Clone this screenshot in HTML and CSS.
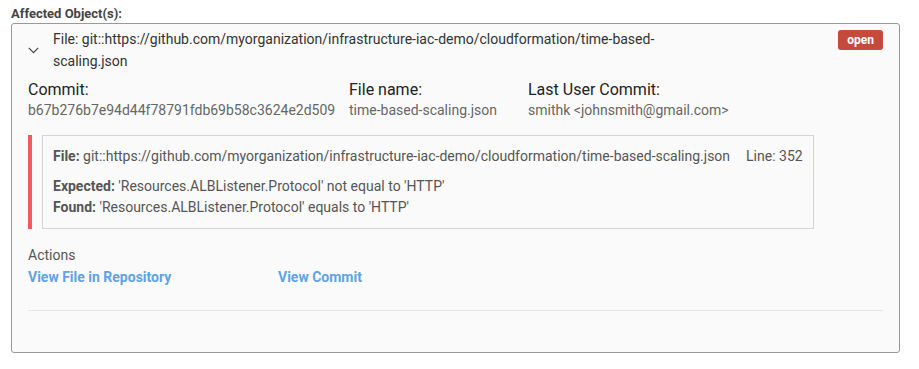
FILE: index.html
```html
<!DOCTYPE html>
<html lang="en">
<head>
    <meta charset="UTF-8">
    <title>Affected Objects</title>
    <link rel="stylesheet" href="styles.css">
</head>
<body>
    <div class="section-title">Affected Object(s):</div>

    <div class="object-card">
        <div class="object-header">
            <span class="chevron">
                <svg width="11" height="7" viewBox="0 0 11 7"><path d="M0.8 0.8 L5.5 5.6 L10.2 0.8" fill="none" stroke="#444" stroke-width="1.2"/></svg>
            </span>
            <div class="object-path">File: git::https://github.com/myorganization/infrastructure-iac-demo/cloudformation/time-based-scaling.json</div>
            <span class="status-badge">open</span>
        </div>

        <div class="commit-info">
            <div class="info-col">
                <div class="info-label">Commit:</div>
                <div class="info-value">b67b276b7e94d44f78791fdb69b58c3624e2d509</div>
            </div>
            <div class="info-col">
                <div class="info-label">File name:</div>
                <div class="info-value">time-based-scaling.json</div>
            </div>
            <div class="info-col">
                <div class="info-label">Last User Commit:</div>
                <div class="info-value">smithk &lt;johnsmith@gmail.com&gt;</div>
            </div>
        </div>

        <div class="finding">
            <div class="finding-box">
                <div class="finding-file">
                    <span><b>File:</b> git::https://github.com/myorganization/infrastructure-iac-demo/cloudformation/time-based-scaling.json</span>
                    <span class="finding-line">Line: 352</span>
                </div>
                <div class="finding-detail"><b>Expected:</b> 'Resources.ALBListener.Protocol' not equal to 'HTTP'</div>
                <div class="finding-detail"><b>Found:</b> 'Resources.ALBListener.Protocol' equals to 'HTTP'</div>
            </div>
        </div>

        <div class="actions">
            <div class="actions-title">Actions</div>
            <div class="actions-links">
                <a href="#" class="action-link">View File in Repository</a>
                <a href="#" class="action-link">View Commit</a>
            </div>
        </div>

        <div class="divider"></div>
    </div>
</body>
</html>
```

FILE: styles.css
```css
body {
    font-family: Roboto, 'Liberation Sans', sans-serif;
    margin: 0;
    padding: 4px 19px 0 11px;
    background: #fff;
}

.section-title {
    font-size: 13px;
    font-weight: 700;
    color: #444;
    line-height: 19px;
}

.object-card {
    background: #fafafa;
    border: 1px solid #999;
    border-radius: 3px;
    padding: 4px 16px 41px 16px;
}

.object-header {
    display: flex;
    align-items: flex-start;
}

.chevron {
    width: 25px;
    padding-top: 19px;
    display: flex;
}

.object-path {
    max-width: 620px;
    font-size: 14px;
    line-height: 22px;
    color: #333;
}

.status-badge {
    margin-left: auto;
    margin-top: 2px;
    background: #c64a3b;
    color: #fff;
    font-size: 12px;
    font-weight: 700;
    line-height: 20px;
    padding: 0 9px;
    border-radius: 3px;
}

.commit-info {
    display: grid;
    grid-template-columns: 321px 179px auto;
    margin-top: 8px;
}

.info-label {
    font-size: 16px;
    line-height: 20px;
    color: #222;
}

.info-value {
    font-size: 14px;
    line-height: 20px;
    color: #666;
}

.finding {
    margin-top: 15px;
    border-left: 4px solid #f25b5b;
    padding-left: 10px;
    width: fit-content;
}

.finding-box {
    border: 1px solid #d4d4d4;
    padding: 10px 10px 10px 10px;
    font-size: 14px;
    color: #555;
}

.finding-file {
    display: flex;
    gap: 16px;
    white-space: nowrap;
    line-height: 20px;
    margin-bottom: 10px;
}

.finding-detail {
    line-height: 21px;
}

.finding b {
    font-weight: 700;
}

.actions {
    margin-top: 16px;
}

.actions-title {
    font-size: 14px;
    color: #555;
    line-height: 20px;
}

.actions-links {
    display: grid;
    grid-template-columns: 250px auto;
}

.action-link {
    font-size: 14px;
    font-weight: 700;
    color: #5ea3e6;
    text-decoration: none;
    line-height: 24px;
}

.divider {
    border-top: 1px solid #e6e6e6;
    margin-top: 21px;
}
```
